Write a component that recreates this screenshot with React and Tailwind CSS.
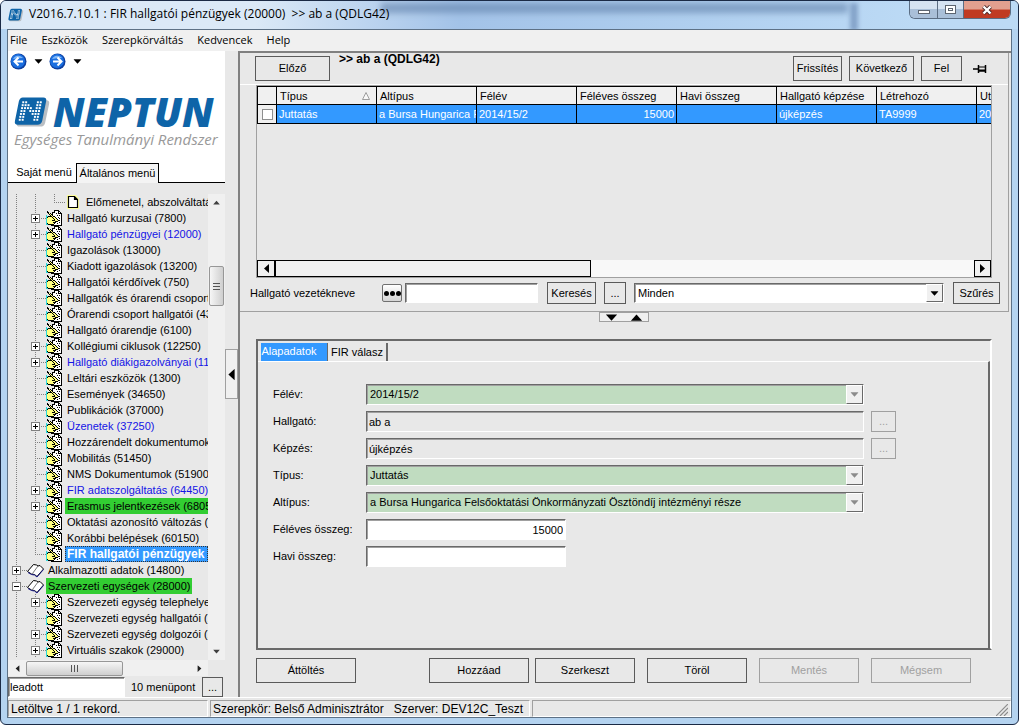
import React from "react";

const treeItems = [
  { level: 2, label: "Előmenetel, abszolváltatás", icon: "page", last: true },
  { level: 1, label: "Hallgató kurzusai (7800)", toggle: "plus" },
  { level: 1, label: "Hallgató pénzügyei (12000)", toggle: "plus", tone: "link" },
  { level: 1, label: "Igazolások (13000)" },
  { level: 1, label: "Kiadott igazolások (13200)" },
  { level: 1, label: "Hallgatói kérdőívek (750)" },
  { level: 1, label: "Hallgatók és órarendi csoporto" },
  { level: 1, label: "Órarendi csoport hallgatói (435" },
  { level: 1, label: "Hallgató órarendje (6100)" },
  { level: 1, label: "Kollégiumi ciklusok (12250)", toggle: "plus" },
  { level: 1, label: "Hallgató diákigazolványai (115", toggle: "plus", tone: "link" },
  { level: 1, label: "Leltári eszközök (1300)" },
  { level: 1, label: "Események (34650)" },
  { level: 1, label: "Publikációk (37000)" },
  { level: 1, label: "Üzenetek (37250)", toggle: "plus", tone: "link" },
  { level: 1, label: "Hozzárendelt dokumentumok" },
  { level: 1, label: "Mobilitás (51450)" },
  { level: 1, label: "NMS Dokumentumok (51900)" },
  { level: 1, label: "FIR adatszolgáltatás (64450)", toggle: "plus", tone: "link" },
  { level: 1, label: "Erasmus jelentkezések (68050", toggle: "plus", tone: "green" },
  { level: 1, label: "Oktatási azonosító változás (7" },
  { level: 1, label: "Korábbi belépések (60150)" },
  { level: 1, label: "FIR hallgatói pénzügyek", tone: "selected", last: true },
  { level: 0, label: "Alkalmazotti adatok (14800)", icon: "book", toggle: "plus" },
  { level: 0, label: "Szervezeti egységek (28000)", icon: "book", toggle: "minus", tone: "green" },
  { level: 1, label: "Szervezeti egység telephelyei", toggle: "plus" },
  { level: 1, label: "Szervezeti egység hallgatói (2" },
  { level: 1, label: "Szervezeti egység dolgozói (2", toggle: "plus" },
  { level: 1, label: "Virtuális szakok (29000)", toggle: "plus" },
];

const tones = {
  link: "text-[#1414e6]",
  green: "bg-[#32cd32]",
  selected:
    "grow bg-[#3399ff] text-white text-[12px] font-bold outline-1 -outline-offset-1 outline-dotted outline-[#333]",
};

const columns = [
  { title: "Típus", value: "Juttatás", sorted: true },
  { title: "Altípus", value: "a Bursa Hungarica F" },
  { title: "Félév", value: "2014/15/2" },
  { title: "Féléves összeg", value: "15000", right: true },
  { title: "Havi összeg", value: "" },
  { title: "Hallgató képzése", value: "újképzés" },
  { title: "Létrehozó", value: "TA9999" },
  { title: "Ut", value: "20" },
];

function Triangle({ dir, className = "" }) {
  const paths = {
    down: "M0 2h9L4.5 7z",
    up: "M0 7h9L4.5 2z",
    left: "M7 0v9L2 4.5z",
    right: "M2 0v9l5-4.5z",
  };
  return (
    <svg viewBox="0 0 9 9" className={`size-[9px] shrink-0 ${className}`} fill="currentColor">
      <path d={paths[dir]} />
    </svg>
  );
}

// Turns rows of characters into one path of 1x1 squares for the given character
function pixelPath(rows, char) {
  let d = "";
  rows.forEach((row, y) => {
    [...row].forEach((c, x) => {
      if (c === char) d += `M${x} ${y}h1v1h-1z`;
    });
  });
  return d;
}

const markDots = [
  "xx...xx",
  "xxx..xx",
  "xxxx.xx",
  "xx.xxxx",
  "xx..xxx",
  "xx...xx",
  "xx...xx",
];

function NeptunMark({ className }) {
  return (
    <svg viewBox="0 0 38 32" className={className}>
      <path d="M11 4h22q4 0 3 4l-4 19q-1 4-5 4H6q-4 0-3-4L7 8q1-4 4-4z" fill="#b9bec3" />
      <path d="M9 1h21q4 0 3 4l-4 20q-1 4-5 4H4q-4 0-3-4L5 5q1-4 4-4z" fill="#0e64a8" />
      <g fill="#fff">
        {markDots.map((row, y) =>
          [...row].map((c, x) =>
            c === "x" ? (
              <rect key={`${x}-${y}`} x={8.5 + x * 3 - y * 0.6} y={5 + y * 3} width="2" height="2" />
            ) : null
          )
        )}
      </g>
    </svg>
  );
}

function NavIcon({ dir }) {
  return (
    <svg viewBox="0 0 17 17" className="size-[17px]">
      <circle cx="8.5" cy="8.5" r="8" fill="#0d3fa0" />
      <circle cx="8" cy="8" r="7" fill="#1b6fe0" />
      <path d="M3 6a6 6 0 0 1 10-1q-5 0-10 1z" fill="#7db6f7" />
      <path
        d={dir === "left" ? "M13 8.5H5M8.500 4.500l-4 4 4 4" : "M4 8.5h8M8.500 4.500l4 4-4 4"}
        stroke="#fff"
        strokeWidth="2"
        fill="none"
      />
    </svg>
  );
}

const handPixels = [
  "........kkkkk...",
  ".k......kwwwkk..",
  ".kk...kkkwwwkwk.",
  "..kyk.kwwwkwkkkk",
  "...kykkwwwwwwwwk",
  "c...kykwwwwkwkwk",
  "cckkkkykkwwwwwwk",
  "ckyyyykyykwwkwwk",
  "cyyyyyykyykwwkwk",
  "cyyyyyyykyykwwwk",
  "cyyyyykkkyyykkwk",
  "cyyyyyyyykkkwwwk",
  "cyyyyyykkkwwwkwk",
  "ckyyyyyykwwkwwwk",
  "cckkkkkkwwwwwwwk",
  ".....kkkkkkkkkkk",
];

const handLayers = [
  { char: "w", fill: "#ffffff" },
  { char: "y", fill: "#ffff80" },
  { char: "c", fill: "#30d8d8" },
  { char: "k", fill: "#000000" },
].map((layer) => ({ ...layer, d: pixelPath(handPixels, layer.char) }));

function HandIcon() {
  return (
    <svg viewBox="0 0 17 16" className="h-4 w-[17px] shrink-0" shapeRendering="crispEdges">
      {handLayers.map((layer) => (
        <path key={layer.char} d={layer.d} fill={layer.fill} />
      ))}
    </svg>
  );
}

function BookIcon() {
  return (
    <svg viewBox="0 0 17 16" className="h-4 w-[17px] shrink-0">
      <path d="M.5 9.500L6.500 2.500l3 .5 1.500 1 2-.5 3.500 3.500-6.500 7.500-2.500-2-3-.5z" fill="#fff" stroke="#000" />
      <path d="M1 10.500l3.500 2 3 .5 2.500 2 6.500-7.500" fill="none" stroke="#1c1c8c" />
      <path d="M11 4l-5.500 7.500" stroke="#555" strokeWidth=".8" />
    </svg>
  );
}

function PageIcon() {
  return (
    <svg viewBox="0 0 17 16" className="h-4 w-[17px] shrink-0">
      <path d="M2 1h9l3 4v10H2z" fill="#ffff9a" />
      <path d="M3.500 2.500h6l3 3v8h-9zM9.500 2.500v3h3" fill="#fff" stroke="#000" strokeWidth="1.2" />
    </svg>
  );
}

// One 19px step of the tree's connector lines
function TreeCell({ branch, end, toggle }) {
  return (
    <svg viewBox="0 0 19 16" className="h-4 w-[19px] shrink-0" shapeRendering="crispEdges">
      <g stroke="#808080" strokeDasharray="1 1">
        <path d={end ? "M8.500 0v8" : "M8.500 0v16"} />
        {branch && <path d="M8 8.500h11" />}
      </g>
      {toggle && (
        <g>
          <rect x="4.5" y="4.5" width="8" height="8" fill="#fff" stroke="#808080" />
          <path d={toggle === "plus" ? "M6 8.500h5M8.500 6v5" : "M6 8.500h5"} stroke="#000" />
        </g>
      )}
    </svg>
  );
}

function TreeRow({ item }) {
  const Icon = item.icon === "book" ? BookIcon : item.icon === "page" ? PageIcon : HandIcon;
  return (
    <li className="flex h-4 items-center">
      {item.level > 0 && <TreeCell />}
      {item.level > 1 && <TreeCell />}
      <TreeCell branch end={item.last} toggle={item.toggle} />
      <Icon />
      <a
        href="#"
        className={`ml-0.5 h-4 px-0.5 leading-4 whitespace-nowrap ${tones[item.tone] || ""}`}
      >
        {item.label}
      </a>
    </li>
  );
}

function Button({ className = "", disabled, children, ...rest }) {
  return (
    <button
      disabled={disabled}
      className={`shrink-0 border text-center ${disabled ? "border-[#a0a0a0] text-[#a0a0a0]" : "border-[#5a5a5a]"} ${className}`}
      {...rest}
    >
      {children}
    </button>
  );
}

const sunken =
  "border border-t-[#696969] border-l-[#696969] border-b-white border-r-white shadow-[inset_1px_1px_0_#a0a0a0]";

function Combo({ id, label, value, disabled, className = "" }) {
  return (
    <div className={`relative ${sunken} ${className}`}>
      <select
        id={id}
        aria-label={label}
        disabled={disabled}
        className="block size-full appearance-none bg-transparent pr-5 pl-[3px] text-black opacity-100 outline-none"
      >
        <option>{value}</option>
      </select>
      <span
        className={`pointer-events-none absolute inset-y-0 right-0 flex w-[17px] items-center justify-center border border-t-white border-r-[#696969] border-b-[#696969] border-l-white bg-[#f0f0f0] ${disabled ? "text-[#8c8c8c]" : "text-black"}`}
      >
        <Triangle dir="down" className="scale-90" />
      </span>
    </div>
  );
}

const fields = [
  { id: "felev", label: "Félév:", value: "2014/15/2", kind: "combo" },
  { id: "hallgato", label: "Hallgató:", value: "ab a", kind: "lookup" },
  { id: "kepzes", label: "Képzés:", value: "újképzés", kind: "lookup" },
  { id: "tipus", label: "Típus:", value: "Juttatás", kind: "combo" },
  {
    id: "altipus",
    label: "Altípus:",
    value: "a Bursa Hungarica Felsőoktatási Önkormányzati Ösztöndíj intézményi része",
    kind: "combo",
  },
  { id: "feleves", label: "Féléves összeg:", value: "15000", kind: "amount" },
  { id: "havi", label: "Havi összeg:", value: "", kind: "amount" },
];

function FormRow({ field }) {
  return (
    <div className="flex h-[21px] items-center">
      <label htmlFor={field.id} className="w-[93px] shrink-0">
        {field.label}
      </label>
      {field.kind === "combo" && (
        <Combo id={field.id} value={field.value} disabled className="mr-[124px] h-[21px] flex-1 bg-[#c0dcc0]" />
      )}
      {field.kind === "lookup" && (
        <>
          <input
            id={field.id}
            readOnly
            defaultValue={field.value}
            className={`h-[21px] min-w-0 flex-1 px-0.5 ${sunken}`}
          />
          <Button disabled aria-label={`${field.label} keresés`} className="mr-[92px] ml-[7px] h-[21px] w-[25px]">
            ...
          </Button>
        </>
      )}
      {field.kind === "amount" && (
        <input
          id={field.id}
          defaultValue={field.value}
          className={`h-[21px] w-[200px] bg-white px-0.5 text-right ${sunken}`}
        />
      )}
    </div>
  );
}

function TitleBar() {
  return (
    <header className="relative flex h-7 shrink-0 items-start overflow-hidden bg-linear-to-r from-[#dbe9f7] from-25% via-[#a3c3e8] via-45% to-[#bcdaf5] to-90% pl-[7px]">
      {/* Shapes of the window behind the glass */}
      <div className="absolute top-0.5 right-[170px] left-[380px] h-2.5 bg-[#5f7ea8]/60 blur-[3px]" />
      <div className="absolute top-0.5 right-[160px] h-7 w-2 bg-[#6f8fb8]/70 blur-[2px]" />
      <NeptunMark className="relative mt-1.5 size-4" />
      <h1 className="relative mt-[5px] ml-[5px] flex-1 font-['Open_Sans',sans-serif] text-[12px] leading-4 whitespace-pre">
        V2016.7.10.1 : FIR hallgatói pénzügyek (20000)  &gt;&gt; ab a (QDLG42)
      </h1>
      <div className="relative mr-[7px] flex h-[18px] overflow-hidden rounded-b-md border border-t-0 border-[#5b6d83]">
        <button
          aria-label="Kis méret"
          className="flex w-7 items-center justify-center border-r border-[#5b6d83] bg-linear-to-b from-[#d5e3f2] from-50% to-[#a9bfd8] to-50%"
        >
          <span className="mt-1 h-1 w-3 border border-[#5d6570] bg-white" />
        </button>
        <button
          aria-label="Teljes méret"
          className="flex w-[26px] items-center justify-center border-r border-[#5b6d83] bg-linear-to-b from-[#d5e3f2] from-50% to-[#a9bfd8] to-50%"
        >
          <span className="flex h-[9px] w-[11px] items-center justify-center border border-[#5d6570] bg-white">
            <span className="h-[3px] w-[5px] border border-[#5d6570]" />
          </span>
        </button>
        <button
          aria-label="Bezárás"
          className="flex w-[46px] items-center justify-center bg-linear-to-b from-[#e2a08f] from-45% to-[#c03a22] to-55%"
        >
          <svg viewBox="0 0 12 10" className="h-2.5 w-3">
            <path d="M2.500 1.500l7 7M9.500 1.500l-7 7" stroke="#4a2a2a" strokeWidth="4" />
            <path d="M2.500 1.500l7 7M9.500 1.500l-7 7" stroke="#fff" strokeWidth="2.4" />
          </svg>
        </button>
      </div>
    </header>
  );
}

function Sidebar() {
  return (
    <aside className="flex w-[217px] shrink-0 flex-col">
      <div className="flex flex-col bg-white">
        <div className="flex h-5 items-center pl-0.5">
          <button aria-label="Vissza"><NavIcon dir="left" /></button>
          <button aria-label="Előzmények" className="ml-[7px]"><Triangle dir="down" className="scale-90" /></button>
          <button aria-label="Előre" className="ml-1.5"><NavIcon dir="right" /></button>
          <button aria-label="Következők" className="ml-[7px]"><Triangle dir="down" className="scale-90" /></button>
        </div>
        <div className="mt-[21px] flex h-10 items-center pl-1.5 font-['Open_Sans',sans-serif]">
          <NeptunMark className="h-8 w-[37px]" />
          <span className="ml-0.5 text-[40px] leading-10 font-extrabold text-[#0e64a8] italic">NEPTUN</span>
        </div>
        <div className="pl-1.5 font-['Open_Sans',sans-serif] text-[15px] leading-[14px] whitespace-nowrap text-[#999] italic">
          Egységes Tanulmányi Rendszer
        </div>
        <div role="tablist" className="mt-[17px] flex h-5 items-stretch">
          <button role="tab" aria-selected="false" className="w-[68px] border-b border-black pl-1">
            Saját menü
          </button>
          <button role="tab" aria-selected="true" className="w-[83px] border border-b-0 border-black bg-[#f4f4f4]">
            Általános menü
          </button>
          <span className="flex-1 border-b border-black" />
        </div>
      </div>

      <div className="mt-[11px] flex min-h-0 flex-1">
        <ul className="min-w-0 flex-1 overflow-hidden">
          {treeItems.map((item) => (
            <TreeRow key={item.label} item={item} />
          ))}
        </ul>
        <div className="flex w-[17px] flex-col items-center bg-[#f0f0f0]">
          <button aria-label="Fel" className="flex h-[17px] items-center text-[#404040]"><Triangle dir="up" className="scale-75" /></button>
          <div className="mt-[55px] flex h-10 w-[15px] flex-col items-center justify-center gap-0.5 rounded-xs border border-[#979797] bg-linear-to-r from-[#f6f6f6] to-[#cfcfcf]">
            <span className="h-px w-[7px] bg-[#555]" />
            <span className="h-px w-[7px] bg-[#555]" />
            <span className="h-px w-[7px] bg-[#555]" />
          </div>
          <button aria-label="Le" className="mt-auto flex h-[17px] items-center text-[#404040]"><Triangle dir="down" className="scale-75" /></button>
        </div>
      </div>
      <div className="flex h-4 w-[200px] items-center bg-[#f0f0f0] text-[#222]">
        <button aria-label="Balra" className="flex w-[18px] justify-center"><Triangle dir="left" className="scale-75" /></button>
        <div className="flex h-[15px] w-[97px] items-center justify-center gap-0.5 rounded-xs border border-[#979797] bg-linear-to-b from-[#f6f6f6] to-[#cfcfcf]">
          <span className="h-[7px] w-px bg-[#555]" />
          <span className="h-[7px] w-px bg-[#555]" />
          <span className="h-[7px] w-px bg-[#555]" />
        </div>
        <button aria-label="Jobbra" className="ml-auto flex w-[18px] justify-center"><Triangle dir="right" className="scale-75" /></button>
      </div>
      <div className="mt-px flex h-5 items-center">
        <input aria-label="Menüpont keresése" defaultValue="leadott" className={`h-5 w-[117px] bg-white px-px ${sunken}`} />
        <span className="ml-1.5 flex-1 whitespace-nowrap">10 menüpont</span>
        <Button aria-label="Tovább" className="mr-0.5 h-5 w-[21px]">...</Button>
      </div>
    </aside>
  );
}

function Grid() {
  return (
    <div className="mx-4 flex h-[193px] flex-col border border-[#a0a0a0]">
      <div className="overflow-hidden">
        <table className="w-max table-fixed border-collapse">
          <thead>
            <tr className="h-[18px] bg-[#f0f0f0]">
              <th className="w-[19px] border border-black p-0" aria-label="Kijelölés" />
              {columns.map((col) => (
                <th
                  key={col.title}
                  scope="col"
                  className="w-[100px] max-w-[100px] overflow-hidden border border-black p-0 pl-[3px] text-left font-normal whitespace-nowrap"
                >
                  <span className="flex items-center leading-4">
                    {col.title}
                    {col.sorted && (
                      <svg viewBox="0 0 8 8" className="mr-1.5 ml-auto size-2">
                        <path d="M.5 7.500L4 .5l3.500 7z" fill="#f8f8f8" stroke="#888" strokeWidth=".8" />
                      </svg>
                    )}
                  </span>
                </th>
              ))}
            </tr>
          </thead>
          <tbody>
            <tr className="h-[19px] bg-[#3399ff] text-white">
              <td className="border border-black bg-[#f0f0f0] p-0 text-center">
                <input
                  type="checkbox"
                  aria-label="Sor kijelölése"
                  className="mx-auto block size-[11px] appearance-none border border-[#8e8f8f] bg-white"
                />
              </td>
              {columns.map((col) => (
                <td
                  key={col.title}
                  className={`max-w-[100px] overflow-hidden border border-black px-0.5 py-0 leading-4 whitespace-nowrap ${col.right ? "text-right" : ""}`}
                >
                  {col.value}
                </td>
              ))}
            </tr>
          </tbody>
        </table>
      </div>
      <div className="mt-auto flex h-[17px] bg-[#f8f8f8]">
        <button aria-label="Balra görgetés" className="flex w-[18px] items-center justify-center border border-black bg-[#f0f0f0]">
          <Triangle dir="left" />
        </button>
        <div className="w-[316px] border border-black bg-[#f0f0f0]" />
        <button aria-label="Jobbra görgetés" className="ml-auto flex w-[17px] items-center justify-center border border-black bg-[#f0f0f0]">
          <Triangle dir="right" />
        </button>
      </div>
    </div>
  );
}

function FilterRow() {
  return (
    <div className="mt-1 mb-[7px] flex h-[22px] items-center pr-2 pl-2.5">
      <label htmlFor="vezeteknev" className="w-[132px] shrink-0">Hallgató vezetékneve</label>
      <button
        aria-label="Keresési mód"
        className="flex h-[18px] w-5 items-center justify-center gap-px rounded-xs border border-[#707070] bg-linear-to-b from-white to-[#d5d5d5]"
      >
        <span className="size-[5px] rounded-full bg-black" />
        <span className="size-[5px] rounded-full bg-black" />
        <span className="size-[5px] rounded-full bg-black" />
      </button>
      <input id="vezeteknev" className={`ml-[3px] h-5 w-[133px] bg-white px-1 ${sunken}`} />
      <Button className="ml-[9px] h-[22px] w-[49px]">Keresés</Button>
      <Button aria-label="Keresés beállításai" className="ml-2 h-[22px] w-[22px]">...</Button>
      <Combo label="Szűrő" value="Minden" className="ml-2 h-5 flex-1 bg-white" />
      <Button className="ml-[9px] h-[22px] w-[47px]">Szűrés</Button>
    </div>
  );
}

function DetailPanel() {
  return (
    <section className="mt-[17px] mr-[19px] ml-4 flex min-h-0 flex-1 flex-col border-2 border-t-[#696969] border-r-white border-b-[#696969] border-l-[#696969]">
      <div role="tablist" className="flex h-5 items-end pl-[3px]">
        <button role="tab" aria-selected="true" className="h-[18px] w-[66px] bg-[#3399ff] pr-2.5 pb-0.5 text-white">
          Alapadatok
        </button>
        <button role="tab" aria-selected="false" className="h-[18px] w-[61px] border-r-2 border-l border-[#696969]">
          FIR válasz
        </button>
      </div>
      <div className="flex flex-1 flex-col gap-1.5 border-t border-r-2 border-t-white border-r-[#696969] pt-[22px] pl-[15px]">
        {fields.map((field) => (
          <FormRow key={field.id} field={field} />
        ))}
      </div>
    </section>
  );
}

function Workspace() {
  return (
    <main className="flex min-w-0 flex-1 flex-col border-t-2 border-l-2 border-[#808080]">
      <div className="mr-0.5 flex flex-col border-r border-b border-[#a0a0a0]">
        <div className="flex h-8 items-center border-b border-white pl-[15px]">
          <Button className="h-[25px] w-[75px]">Előző</Button>
          <h2 className="ml-[9px] flex-1 self-start text-[12px] leading-3 font-bold">&gt;&gt; ab a (QDLG42)</h2>
          <div className="flex items-center pr-[21px]">
            <Button className="h-[25px] w-[49px]">Frissítés</Button>
            <Button className="ml-[7px] h-[25px] w-[65px]">Következő</Button>
            <Button className="ml-[7px] h-[25px] w-[41px]">Fel</Button>
            <button aria-label="Rögzítés" className="ml-[11px]">
              <svg viewBox="0 0 14 10" className="h-2.5 w-3.5" fill="none" stroke="#000">
                <path d="M0 5h5" strokeWidth="1.5" />
                <path d="M5.500 1v8M12.500 1v8" strokeWidth="1.5" />
                <path d="M6 3h6M6 7h6" />
                <path d="M6 6.500h6" strokeWidth="2" />
              </svg>
            </button>
          </div>
        </div>
        <Grid />
        <FilterRow />
      </div>
      <div className="ml-[359px] flex h-2.5 w-[50px] shrink-0 items-center justify-center gap-4 border border-[#a0a0a0] bg-[#f0f0f0]">
        <button aria-label="Lenyitás"><Triangle dir="down" className="scale-125" /></button>
        <button aria-label="Felcsukás"><Triangle dir="up" className="scale-125" /></button>
      </div>
      <DetailPanel />
      <div className="mt-2 mb-3.5 flex h-[25px] pr-10 pl-4">
        <Button className="mr-auto h-[25px] w-[100px]">Áttöltés</Button>
        <Button className="h-[25px] w-[100px]">Hozzáad</Button>
        <Button className="ml-1.5 h-[25px] w-[100px]">Szerkeszt</Button>
        <Button className="ml-3 h-[25px] w-[100px]">Töröl</Button>
        <Button disabled className="ml-3 h-[25px] w-[100px]">Mentés</Button>
        <Button disabled className="ml-3 h-[25px] w-[100px]">Mégsem</Button>
      </div>
    </main>
  );
}

function StatusBar() {
  const cell = "border border-t-[#a0a0a0] border-l-[#a0a0a0] border-r-white border-b-white px-0.5 whitespace-pre";
  return (
    <footer className="flex h-5 shrink-0 items-stretch gap-0.5 border-t border-white pt-0.5 text-[12px] leading-4">
      <span className={`w-[200px] ${cell}`}>Letöltve 1 / 1 rekord.</span>
      <span className={`w-[320px] ${cell}`}>Szerepkör: Belső Adminisztrátor   Szerver: DEV12C_Teszt</span>
      <span className={`flex flex-1 items-end justify-end ${cell}`}>
        <svg viewBox="0 0 12 12" className="size-3" stroke="#8c8c8c" strokeWidth="1.2">
          <path d="M0 12L12 0M4 12l8-8M8 12l4-4" />
        </svg>
      </span>
    </footer>
  );
}

export default function App() {
  return (
    <div className="flex h-screen flex-col overflow-hidden rounded-md border border-[#1b2a45] bg-[#b4d3f0] font-['Liberation_Sans',Arial,sans-serif] text-[11px] text-black">
      <TitleBar />
      <div className="mx-1.5 mb-1.5 flex min-h-0 flex-1 flex-col border border-[#5d7186] bg-[#e8e8e8]">
        <nav className="flex h-[21px] w-full shrink-0 items-center gap-3.5 bg-[#f0f0f0] pl-0.5 font-['Open_Sans',sans-serif] text-[11px]">
          <button>File</button>
          <button>Eszközök</button>
          <button>Szerepkörváltás</button>
          <button>Kedvencek</button>
          <button>Help</button>
        </nav>
        <div className="flex min-h-0 flex-1">
          <Sidebar />
          <div className="flex w-[13px] shrink-0 flex-col justify-center">
            <button aria-label="Menü elrejtése" className="flex h-[50px] items-center justify-center border border-[#a0a0a0] bg-[#f0f0f0]">
              <Triangle dir="left" className="scale-125" />
            </button>
          </div>
          <Workspace />
        </div>
        <StatusBar />
      </div>
    </div>
  );
}
